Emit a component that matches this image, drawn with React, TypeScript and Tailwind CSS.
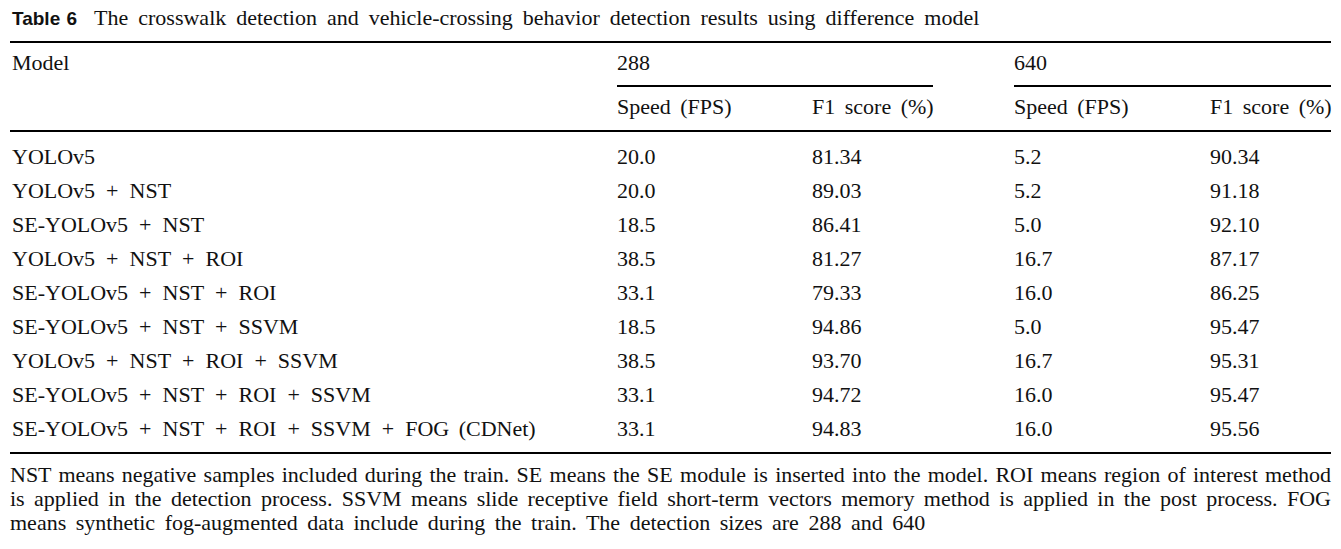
const rows = [
  ["YOLOv5", "20.0", "81.34", "5.2", "90.34"],
  ["YOLOv5 + NST", "20.0", "89.03", "5.2", "91.18"],
  ["SE-YOLOv5 + NST", "18.5", "86.41", "5.0", "92.10"],
  ["YOLOv5 + NST + ROI", "38.5", "81.27", "16.7", "87.17"],
  ["SE-YOLOv5 + NST + ROI", "33.1", "79.33", "16.0", "86.25"],
  ["SE-YOLOv5 + NST + SSVM", "18.5", "94.86", "5.0", "95.47"],
  ["YOLOv5 + NST + ROI + SSVM", "38.5", "93.70", "16.7", "95.31"],
  ["SE-YOLOv5 + NST + ROI + SSVM", "33.1", "94.72", "16.0", "95.47"],
  ["SE-YOLOv5 + NST + ROI + SSVM + FOG (CDNet)", "33.1", "94.83", "16.0", "95.56"],
];

const grid = "grid grid-cols-[607px_195px_202px_196px_121px]";

// plus signs get a little extra room, like math spacing
const ModelName = ({ name }: { name: string }) => {
  const parts = name.split(" + ");
  return (
    <>
      {parts.map((p, i) => (
        <span key={i}>
          {i > 0 && <span className="mx-[1.5px]"> + </span>}
          {p}
        </span>
      ))}
    </>
  );
};

const App = () => {
  return (
    <div className="w-[1341px] h-[549px] bg-white text-[#111] font-['Times_New_Roman','Liberation_Serif',Tinos,serif] text-[22px] [word-spacing:4px] overflow-hidden">
      <div className="px-[10px]">
        <div className="pt-[6px] h-[30px] leading-[24px] mb-[11px] flex items-baseline whitespace-nowrap">
          <span className="font-['Liberation_Sans',Arial,sans-serif] font-bold text-[19px] [word-spacing:1px] ml-[2px] mr-[17px]">Table 6</span>
          <span className="[word-spacing:4.5px]">The crosswalk detection and vehicle-crossing behavior detection results using difference model</span>
        </div>

        <div className="h-[2px] bg-black" />

        <div className={grid}>
          <div className="row-span-2 pl-[2px] pt-[8px] leading-[24px]">Model</div>
          <div className="col-span-2 pt-[8px] leading-[24px]">
            <div className="w-[316px] pb-[10px] border-b-2 border-black">288</div>
          </div>
          <div className="col-span-2 pt-[8px] leading-[24px]">
            <div className="pb-[10px] border-b-2 border-black">640</div>
          </div>
          <div className="pt-[8px] pb-[11px] leading-[24px]">Speed (FPS)</div>
          <div className="pt-[8px] pb-[11px] leading-[24px]">F1 score (%)</div>
          <div className="pt-[8px] pb-[11px] leading-[24px]">Speed (FPS)</div>
          <div className="pt-[8px] pb-[11px] leading-[24px] whitespace-nowrap">F1 score (%)</div>
        </div>

        <div className="h-[2px] bg-black" />

        <div className="pt-[8px] pb-[6px]">
          {rows.map((r) => (
            <div key={r[0]} className={`${grid} h-[34px] leading-[34px]`}>
              <div className="pl-[2px] whitespace-nowrap">
                <ModelName name={r[0]} />
              </div>
              <div>{r[1]}</div>
              <div>{r[2]}</div>
              <div>{r[3]}</div>
              <div>{r[4]}</div>
            </div>
          ))}
        </div>

        <div className="h-[2px] bg-black" />

        <div className="pt-[9px] leading-[24px] text-justify [text-align-last:justify] [word-spacing:0px]">
          <div>NST means negative samples included during the train. SE means the SE module is inserted into the model. ROI means region of interest method</div>
          <div>is applied in the detection process. SSVM means slide receptive field short-term vectors memory method is applied in the post process. FOG</div>
          <div className="[text-align-last:left] [word-spacing:4px]">means synthetic fog-augmented data include during the train. The detection sizes are 288 and 640</div>
        </div>
      </div>
    </div>
  );
};

export default App;
